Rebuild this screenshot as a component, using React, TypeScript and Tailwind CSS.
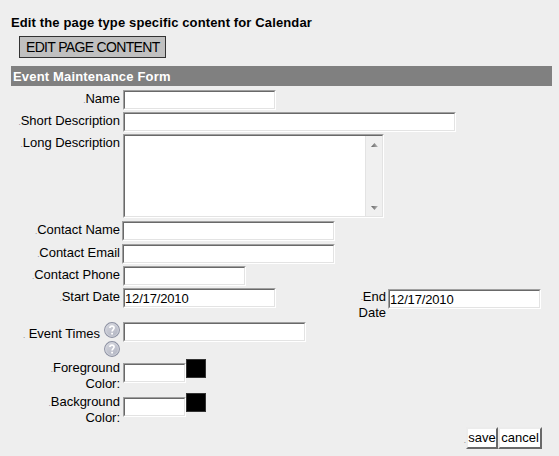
import type { ReactNode } from "react";
import clsx from "clsx";

function Dot() {
  return <span className="text-[8px] leading-none text-gray-500">.</span>;
}

function TextField({ className, value }: { className: string; value?: string }) {
  return (
    <div className={clsx("flex h-5 shrink-0 border border-t-[#a0a0a0] border-l-[#a0a0a0] border-r-white border-b-white", className)}>
      <input
        type="text"
        defaultValue={value}
        className="block h-full w-full min-w-0 rounded-none border border-t-[#696969] border-l-[#696969] border-r-[#e3e3e3] border-b-[#e3e3e3] bg-white pr-px text-[13px] tracking-[-0.16px] outline-none"
      />
    </div>
  );
}

function Row({ label, className, children }: { label: ReactNode; className: string; children: ReactNode }) {
  return (
    <div className={clsx("flex items-start", className)}>
      <div className="w-[109px] shrink-0 pt-px text-right leading-4 tracking-[-0.02px] whitespace-nowrap">{label}</div>
      {children}
    </div>
  );
}

function HelpIcon() {
  return (
    <svg width="16" height="16" viewBox="0 0 16 16" className="block">
      <defs>
        <linearGradient id="help" x1="0" y1="0" x2="0.6" y2="1">
          <stop offset="0" stopColor="#d8d9e0" />
          <stop offset="1" stopColor="#b4b7c4" />
        </linearGradient>
      </defs>
      <circle cx="8" cy="8" r="7.4" fill="url(#help)" stroke="#8e92a3" strokeWidth="1.1" />
      <circle cx="8" cy="8" r="6.4" fill="none" stroke="#d9dbe3" strokeWidth="0.7" />
      <path d="M5.9 6.1C5.9 3.4 10.1 3.5 10.1 6C10.1 7.6 8.1 7.6 8.1 9.5" fill="none" stroke="#fff" strokeWidth="1.6" />
      <rect x="7.2" y="10.8" width="1.8" height="1.7" fill="#fff" />
    </svg>
  );
}

function ScrollArrow({ down }: { down?: boolean }) {
  return (
    <svg width="7" height="4" viewBox="0 0 7 4" className="block">
      <defs>
        <linearGradient id="arrow" x1="0" y1="0" x2="1" y2="0">
          <stop offset="0" stopColor="#606060" />
          <stop offset="1" stopColor="#b8b8b8" />
        </linearGradient>
      </defs>
      <path d={down ? "M0 0H7L3.5 4Z" : "M0 4H7L3.5 0Z"} fill="url(#arrow)" />
    </svg>
  );
}

const button =
  "h-[22px] border-2 border-t-[#ececec] border-l-[#ececec] border-r-[#696969] border-b-[#696969] bg-white leading-[18px] whitespace-nowrap";

function App() {
  return (
    <div className="h-[456px] w-[559px] overflow-hidden bg-[#eeeeee] pt-[14px] pl-[11px] font-['Liberation_Sans',Arial,sans-serif] text-[13px] text-black">
      <h1 className="h-[22px] text-[13px] leading-[17px] font-bold tracking-[0.13px]">
        Edit the page type specific content for Calendar
      </h1>
      <button className="ml-2 block h-[22px] w-[147px] border border-[#333] bg-[#c0c0c0] pl-1.5 text-left text-[14px] leading-5 tracking-[-0.67px] whitespace-nowrap">
        EDIT PAGE CONTENT
      </button>
      <h2 className="mt-2 h-5 w-[541px] bg-[#808080] pl-0.5 text-[13px] leading-[21px] font-bold tracking-[0.17px] text-white">
        Event Maintenance Form
      </h2>

      <form>
        <Row className="h-[22px] pt-1" label={<><Dot />Name</>}>
          <TextField className="ml-[3px] w-[153px]" />
        </Row>
        <Row className="h-[22px] pt-1" label={<><Dot />Short Description</>}>
          <TextField className="ml-[3px] w-[333px]" />
        </Row>
        <Row className="h-[87px] pt-1" label={<><Dot />Long Description</>}>
          <div className="ml-[3px] flex h-[84px] w-[261px] border border-t-[#a0a0a0] border-l-[#a0a0a0] border-r-white border-b-white">
            <div className="flex w-full border border-t-[#696969] border-l-[#696969] border-r-[#e3e3e3] border-b-[#e3e3e3] bg-white">
              <textarea className="block min-w-0 flex-1 resize-none overflow-hidden outline-none" />
              <div className="flex w-[17px] flex-col items-start justify-between border-l border-[#e3e3e3] bg-[#f0f0f0] pt-[7px] pb-[6px] pl-[5px]">
                <ScrollArrow />
                <ScrollArrow down />
              </div>
            </div>
          </div>
        </Row>
        <Row className="h-[23px] pt-1" label={<><Dot />Contact Name</>}>
          <TextField className="ml-0.5 w-[213px]" />
        </Row>
        <Row className="h-[22px] pt-1" label={<><Dot />Contact Email</>}>
          <TextField className="ml-0.5 w-[213px]" />
        </Row>
        <Row className="h-[22px] pt-1" label={<><Dot />Contact Phone</>}>
          <TextField className="ml-[3px] w-[123px]" />
        </Row>
        <Row className="h-[34px] pt-1" label={<><Dot />Start Date</>}>
          <TextField className="ml-[3px] w-[153px]" value="12/17/2010" />
          <div className="ml-[80px] w-[30px] pt-px text-right leading-4">
            <div className="flex items-end justify-end">
              <span className="pb-[3px] text-[8px] leading-none text-gray-500">.</span>
              <span>End</span>
            </div>
            <div>Date</div>
          </div>
          <TextField className="mt-px ml-0.5 w-[153px]" value="12/17/2010" />
        </Row>
        <Row
          className="h-[37px] pt-1"
          label={
            <div className="-mt-px flex justify-end gap-1">
              <span className="pt-1"><Dot /> Event Times</span>
              <span className="flex flex-col gap-[3px]"><HelpIcon /><HelpIcon /></span>
            </div>
          }
        >
          <TextField className="ml-[3px] w-[183px]" />
        </Row>
        <Row className="h-[34px] pt-1" label={<><Dot />Foreground<br />Color:</>}>
          <TextField className="mt-1 ml-[3px] w-[63px]" />
          <div className="h-[19px] w-5 border border-[#333] bg-black" />
        </Row>
        <Row className="h-[34px] pt-1" label={<><Dot />Background<br />Color:</>}>
          <TextField className="mt-1 ml-[3px] w-[63px]" />
          <div className="h-[19px] w-5 border border-[#333] bg-black" />
        </Row>
        <div className="mt-1 flex w-[531px] items-end justify-end">
          <span className="pb-1 text-[8px] leading-none text-gray-500">.</span>
          <button type="button" className={clsx(button, "w-8")}>save</button>
          <button type="button" className={clsx(button, "w-11")}>cancel</button>
        </div>
      </form>
    </div>
  );
}

export default App;
